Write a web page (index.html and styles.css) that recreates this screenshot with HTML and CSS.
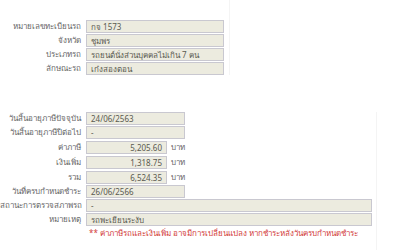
FILE: index.html
```html
<!DOCTYPE html>
<html lang="th">
<head>
    <meta charset="UTF-8">
    <title>ข้อมูลรถ</title>
    <link rel="stylesheet" href="styles.css">
</head>
<body>
    <div class="page">
        <div class="group top">
            <div class="row"><span class="label">หมายเลขทะเบียนรถ</span><div class="field mid">กจ 1573</div></div>
            <div class="row"><span class="label">จังหวัด</span><div class="field mid">ชุมพร</div></div>
            <div class="row"><span class="label">ประเภทรถ</span><div class="field mid">รถยนต์นั่งส่วนบุคคลไม่เกิน 7 คน</div></div>
            <div class="row"><span class="label">ลักษณะรถ</span><div class="field mid">เก๋งสองตอน</div></div>
        </div>

        <div class="group bottom">
            <div class="row"><span class="label">วันสิ้นอายุภาษีปัจจุบัน</span><div class="field date">24/06/2563</div></div>
            <div class="row"><span class="label">วันสิ้นอายุภาษีปีต่อไป</span><div class="field date">-</div></div>
            <div class="row money"><span class="label">ค่าภาษี</span><div class="field amount">5,205.60</div><span class="unit">บาท</span></div>
            <div class="row money"><span class="label">เงินเพิ่ม</span><div class="field amount">1,318.75</div><span class="unit">บาท</span></div>
            <div class="row money"><span class="label">รวม</span><div class="field amount">6,524.35</div><span class="unit">บาท</span></div>
            <div class="row"><span class="label">วันที่ครบกำหนดชำระ</span><div class="field date">26/06/2566</div></div>
            <div class="row"><span class="label">สถานะการตรวจสภาพรถ</span><div class="field wide">-</div></div>
            <div class="row"><span class="label">หมายเหตุ</span><div class="field wide">รถพะเยียนระงับ</div></div>
            <div class="note">** ค่าภาษีรถและเงินเพิ่ม อาจมีการเปลี่ยนแปลง หากชำระหลังวันครบกำหนดชำระ</div>
        </div>
    </div>
</body>
</html>
```

FILE: styles.css
```css
body{
    margin: 0;
    background-color: #ffffff;
    font-family: Tahoma, "Noto Sans", sans-serif;
    font-size: 8px;
    color: #666666;
}
.page{
    width: 400px;
    height: 250px;
    overflow: hidden;
}
.group{
    display: flex;
    flex-direction: column;
    gap: 1px;
}
.top{
    padding-top: 20px;
    width: 229px;
    border-right: 1px solid #f4f4f4;
}
.bottom{
    margin-top: 37px;
    padding-bottom: 13px;
    width: 376px;
    border-right: 1px solid #f4f4f4;
    border-bottom: 1px solid #f0f0f0;
}
.row{
    display: flex;
    align-items: center;
    height: 13px;
}
.row.money{
    height: 14px;
}
.label{
    width: 81px;
    text-align: right;
    padding-right: 5px;
    white-space: nowrap;
}
.field{
    box-sizing: border-box;
    height: 13px;
    line-height: 11px;
    padding: 0 4px;
    background-color: #ecebdf;
    border: 1px solid #c9c8d0;
    color: #5a5a50;
    white-space: nowrap;
}
.mid{
    width: 138px;
}
.date{
    width: 99px;
}
.amount{
    width: 81px;
    text-align: right;
}
.wide{
    width: 286px;
}
.unit{
    padding-left: 4px;
}
.note{
    margin-top: 0;
    padding-left: 89px;
    color: #d23a3a;
    white-space: nowrap;
}
```
